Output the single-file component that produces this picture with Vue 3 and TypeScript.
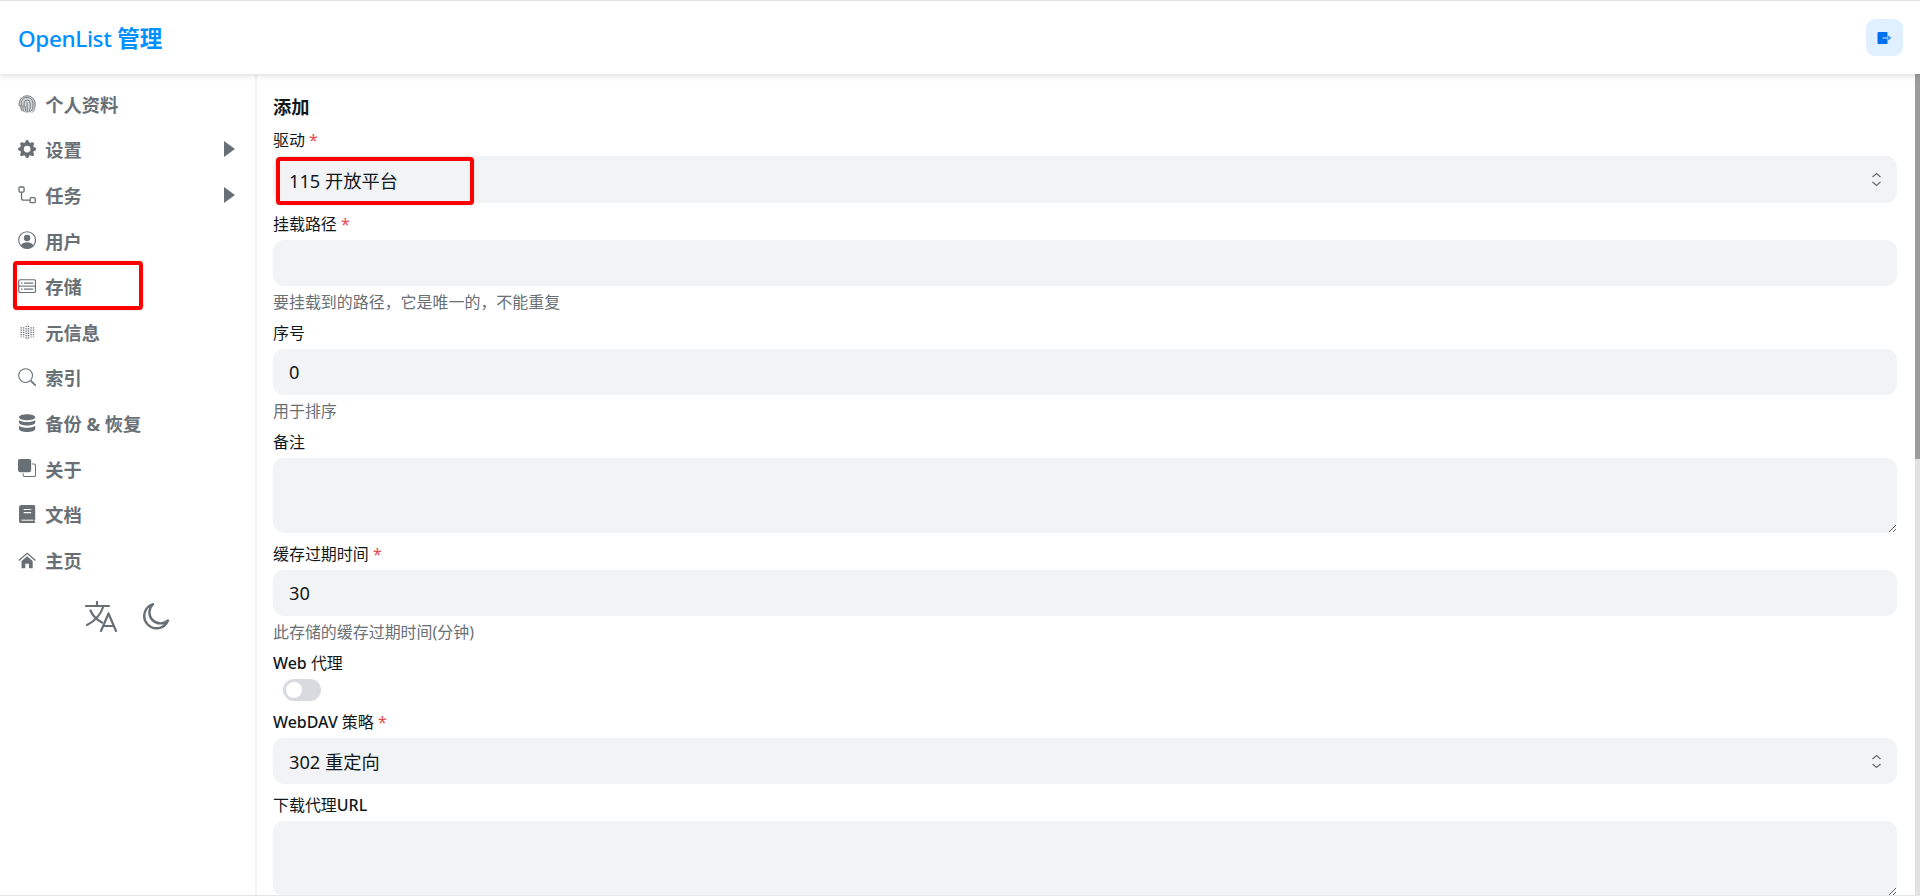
<script setup lang="ts">
interface Shape { d: string; fill?: boolean; w?: number; c?: string; dash?: string }
interface NavItem { label: string; box: string; shapes: Shape[]; caret?: boolean; marked?: boolean }

const gear =
  'M9.405 1.05c-.413-1.4-2.397-1.4-2.81 0l-.1.34a1.464 1.464 0 0 1-2.105.872l-.31-.17c-1.283-.698-2.686.705-1.987 1.987l.169.311c.446.82.023 1.841-.872 2.105l-.34.1c-1.4.413-1.4 2.397 0 2.81l.34.1a1.464 1.464 0 0 1 .872 2.105l-.17.31c-.698 1.283.705 2.686 1.987 1.987l.311-.169a1.464 1.464 0 0 1 2.105.872l.1.34c.413 1.4 2.397 1.4 2.81 0l.1-.34a1.464 1.464 0 0 1 2.105-.872l.31.17c1.283.698 2.686-.705 1.987-1.987l-.169-.311a1.464 1.464 0 0 1 .872-2.105l.34-.1c1.4-.413 1.4-2.397 0-2.81l-.34-.1a1.464 1.464 0 0 1-.872-2.105l.17-.31c.698-1.283-.705-2.686-1.987-1.987l-.311.169a1.464 1.464 0 0 1-2.105-.872l-.1-.34zM8 10.93a2.929 2.929 0 1 1 0-5.86 2.929 2.929 0 0 1 0 5.858z'

const nav: NavItem[] = [
  {
    label: '个人资料', box: '0 0 18 18',
    shapes: [
      { d: 'M9 .4a8.500 8.500 0 1 1 0 17.200A8.500 8.500 0 0 1 9 .4z', fill: true, c: '#d3d5d7' },
      { d: 'M1.200 11V8.500a7.800 7.800 0 0 1 15.600 0V11c0 3-1.500 5.500-3.500 6.500M4 16C3 14 2.800 12 2.800 10', w: .8 },
      { d: 'M3.300 11V8a5.700 5.700 0 0 1 11.400 0v3c0 2.500-1 4.500-2.500 5.500M6 16.500C5 14.500 4.600 12.500 4.600 10', w: .8 },
      { d: 'M6 12V8a3 3 0 0 1 6 0v4c0 2-.5 3.500-1.500 5M8 17c-.7-2-1-4-1-6', w: .8 },
      { d: 'M9 7v5c0 2 .2 3.500 .5 5', w: .8 }
    ]
  },
  { label: '设置', box: '0 0 16 16', caret: true, shapes: [{ d: gear, fill: true }] },
  {
    label: '任务', box: '0 0 18 18', caret: true,
    shapes: [
      { d: 'M1 2a1 1 0 0 1 1-1h3a1 1 0 0 1 1 1v3a1 1 0 0 1-1 1H2a1 1 0 0 1-1-1z', w: 1.3 },
      { d: 'M12 12.500a1 1 0 0 1 1-1h3a1 1 0 0 1 1 1v3a1 1 0 0 1-1 1h-3a1 1 0 0 1-1-1z', w: 1.3 },
      { d: 'M3.500 6v6a2 2 0 0 0 2 2H12', w: 1.3 }
    ]
  },
  {
    label: '用户', box: '0 0 18 18',
    shapes: [
      { d: 'M9 .7a8.300 8.300 0 1 1 0 16.600A8.300 8.300 0 0 1 9 .7z', w: 1.1 },
      { d: 'M9 3.800a3.200 3.200 0 1 1 0 6.400 3.200 3.200 0 0 1 0-6.400z', fill: true },
      { d: 'M2.800 14.200c1.200-2.400 3.600-3.200 6.200-3.200s5 .8 6.200 3.200A8.200 8.200 0 0 1 9 17.300a8.200 8.200 0 0 1-6.200-3.100z', fill: true }
    ]
  },
  {
    label: '存储', box: '0 0 18 18', marked: true,
    shapes: [
      { d: 'M2 2.700h14a1.300 1.300 0 0 1 1.300 1.300v10a1.300 1.300 0 0 1-1.300 1.300H2A1.300 1.300 0 0 1 .7 14V4A1.300 1.300 0 0 1 2 2.700z', w: 1.2 },
      { d: 'M.7 9h16.600', w: 1.1 },
      { d: 'M3 6h1.500M6 6h9M3 12h1.500M6 12h9', w: 1.2 }
    ]
  },
  {
    label: '元信息', box: '0 0 18 20',
    shapes: [
      { d: 'M2.500 4.700v11M5.200 4.700v11M7.900 3.200v14M10.600 3.200v14M13.300 4.700v11M16 4.700v11', w: 1.500, dash: '1.300 1.200' },
      { d: 'M9.200 0v20', w: .7, dash: '1.500 1', c: '#b4b8bb' }
    ]
  },
  {
    label: '索引', box: '0 0 18 18',
    shapes: [
      { d: 'M7.500 .7a6.800 6.800 0 1 1 0 13.600 6.800 6.800 0 0 1 0-13.600z', w: 1.1 },
      { d: 'M12.500 12.500 17.500 17.500', w: 1.6 }
    ]
  },
  {
    label: '备份 & 恢复', box: '0 0 18 18',
    shapes: [
      { d: 'M1 3.200C1 1.200 5 .2 9 .2s8 1 8 3-4 3-8 3-8-1-8-3z', fill: true },
      { d: 'M1 6v2.300c0 2 4 3 8 3s8-1 8-3V6c-1.500 1.500-5 2-8 2S2.500 7.500 1 6z', fill: true },
      { d: 'M1 11.500v3c0 2 4 3.200 8 3.200s8-1.200 8-3.200v-3c-1.500 1.500-5 2-8 2s-6.500-.5-8-2z', fill: true }
    ]
  },
  {
    label: '关于', box: '0 0 18 18',
    shapes: [
      { d: 'M1.800 0h9.400A1.800 1.800 0 0 1 13 1.800v9.400a1.800 1.800 0 0 1-1.800 1.800H1.800A1.800 1.800 0 0 1 0 11.200V1.800A1.800 1.800 0 0 1 1.800 0z', fill: true },
      { d: 'M14 5h1.800a1.500 1.500 0 0 1 1.500 1.500v9.300a1.500 1.500 0 0 1-1.500 1.500H6.500A1.500 1.500 0 0 1 5 15.800V14', w: 1 }
    ]
  },
  {
    label: '文档', box: '0 0 18 18',
    shapes: [
      { d: 'M3.500 0h12A1.500 1.500 0 0 1 17 1.500v12.500c0 .5-.3 .8-.7 1v1.300c.4 .2 .7 .4 .7 .8v.9H3.500A2.500 2.500 0 0 1 1 15.500v-13A2.500 2.500 0 0 1 3.500 0z', fill: true },
      { d: 'M5.500 4.500h7.500M5.500 7.500h7.500', w: 1.100, c: '#ffffff' },
      { d: 'M3.500 15h11.500', w: 1, c: '#ffffff' }
    ]
  },
  {
    label: '主页', box: '0 0 18 18',
    shapes: [
      { d: 'M3.500 9.800 9 5.300l5.500 4.500V17h-3.700v-4.500H7.200V17H3.500z', fill: true },
      { d: 'M.8 9.300 9 2.300l8.200 7', w: 1.300 }
    ]
  }
]
</script>

<template>
  <div class="page">
    <header class="top">
      <h1 class="brand"><span class="brand-en">OpenList</span> 管理</h1>
      <button class="logout" type="button" aria-label="退出">
        <svg width="15" height="14" viewBox="0 0 15 14">
          <path d="M1.500 1h8a1 1 0 0 1 1 1v10a1 1 0 0 1-1 1h-8a1 1 0 0 1-1-1V2a1 1 0 0 1 1-1z" fill="#0070f0" />
          <path d="M5.500 7h6" stroke="#8cc0f8" stroke-width="1.600" fill="none" />
          <path d="M11 4.500 14.500 7 11 9.500z" fill="#3b91f5" />
        </svg>
      </button>
    </header>

    <div class="body">
      <aside class="side">
        <nav class="menu">
          <a v-for="item in nav" :key="item.label" class="item">
            <svg class="ico" :viewBox="item.box" aria-hidden="true">
              <path
                v-for="(s, i) in item.shapes"
                :key="i"
                :d="s.d"
                :fill="s.fill ? (s.c || '#687076') : 'none'"
                :stroke="s.fill ? 'none' : (s.c || '#687076')"
                :stroke-width="s.w"
                :stroke-dasharray="s.dash"
              />
            </svg>
            <span class="item-text">{{ item.label }}</span>
            <span v-if="item.caret" class="caret"></span>
            <span v-if="item.marked" class="mark mark-nav"></span>
          </a>
        </nav>
        <div class="tools">
          <svg width="33" height="31" viewBox="0 0 33 31" fill="none" stroke="#687076" stroke-width="2.200" stroke-linecap="round" stroke-linejoin="round">
            <path d="M1 5h23M12 1v4M18.500 5C16 13 10 20 2 24M5.500 9.500C8 15.500 12 19 17 21.500" />
            <path d="M16 30 23.500 12.500 31 30M18.500 25h10" />
          </svg>
          <svg width="28" height="28" viewBox="0 0 28 28" fill="none" stroke="#687076" stroke-width="2.400" stroke-linejoin="round">
            <path d="M26 18.500A12.300 12.300 0 1 1 11 2.200a10 10 0 0 0 15 16.300z" />
          </svg>
        </div>
      </aside>

      <main class="main">
        <form class="form" @submit.prevent>
          <h2 class="title">添加</h2>

          <div class="field">
            <label class="label">驱动 <em>*</em></label>
            <div class="select first">
              <span>115 开放平台</span>
              <svg class="updown" width="11" height="15" viewBox="0 0 11 15" fill="none" stroke="#687076" stroke-width="1.300"><path d="M1.500 5 5.500 1.500 9.500 5M1.500 10 5.500 13.500 9.500 10" /></svg>
              <span class="mark mark-select"></span>
            </div>
          </div>

          <div class="field">
            <label class="label">挂载路径 <em>*</em></label>
            <input class="input" type="text" />
            <p class="help">要挂载到的路径，它是唯一的，不能重复</p>
          </div>

          <div class="field">
            <label class="label">序号</label>
            <input class="input" type="text" value="0" />
            <p class="help">用于排序</p>
          </div>

          <div class="field">
            <label class="label">备注</label>
            <textarea class="area"></textarea>
          </div>

          <div class="field">
            <label class="label">缓存过期时间 <em>*</em></label>
            <input class="input" type="text" value="30" />
            <p class="help">此存储的缓存过期时间(分钟)</p>
          </div>

          <div class="field">
            <label class="label"><b>Web</b> 代理</label>
            <span class="switch"><span class="knob"></span></span>
          </div>

          <div class="field">
            <label class="label"><b>WebDAV</b> 策略 <em>*</em></label>
            <div class="select">
              <span>302 重定向</span>
              <svg class="updown" width="11" height="15" viewBox="0 0 11 15" fill="none" stroke="#687076" stroke-width="1.300"><path d="M1.500 5 5.500 1.500 9.500 5M1.500 10 5.500 13.500 9.500 10" /></svg>
            </div>
          </div>

          <div class="field">
            <label class="label">下载代理<b>URL</b></label>
            <textarea class="area"></textarea>
          </div>
        </form>
      </main>

      <div class="scrollbar"><div class="thumb"></div></div>
    </div>
  </div>
</template>

<style>
html, body { margin: 0; height: 100%; overflow: hidden; background: #fff; }
</style>

<style scoped>
.page {
  height: 896px;
  box-sizing: border-box;
  display: flex;
  flex-direction: column;
  overflow: hidden;
  border-top: 1px solid #e3e3e3;
  border-bottom: 1px solid #e6e6e6;
  font-family: "Noto Sans", "Noto Sans CJK SC", sans-serif;
  color: #11181c;
}
.top {
  position: relative;
  z-index: 2;
  flex: none;
  height: 73px;
  box-sizing: border-box;
  display: flex;
  align-items: center;
  justify-content: space-between;
  padding: 0 17px 0 18px;
  background: #fff;
  box-shadow: 0 2px 6px rgba(0, 0, 0, .13);
}
.brand {
  margin: 1px 0 0;
  font-size: 22.5px;
  font-weight: 700;
  color: #0091ff;
  line-height: 1.2;
}
.brand-en { font-weight: 500; letter-spacing: -.35px; }
.logout {
  width: 37px;
  height: 37px;
  padding: 0;
  border: 0;
  border-radius: 9px;
  background: #e1f0ff;
  display: flex;
  align-items: center;
  justify-content: center;
}
.body { flex: 1; display: flex; min-height: 0; }
.side {
  flex: none;
  width: 257px;
  box-sizing: border-box;
  border-right: 2px solid #f3f4f5;
  padding: 7px 0 0 18px;
}
.menu { display: flex; flex-direction: column; padding-right: 20px; }
.item {
  position: relative;
  height: 45.6px;
  display: flex;
  align-items: center;
  gap: 9px;
  color: #687076;
  font-size: 18.24px;
  font-weight: 700;
}
.ico { width: 18.24px; height: 18.24px; flex: none; }
.item-text { flex: 1; white-space: nowrap; }
.caret {
  width: 0;
  height: 0;
  border-left: 11.500px solid #687076;
  border-top: 8px solid transparent;
  border-bottom: 8px solid transparent;
}
.mark {
  position: absolute;
  box-sizing: border-box;
  border: 4px solid #f00;
  border-radius: 4px;
  box-shadow: 0 0 1px #666;
  pointer-events: none;
}
.mark-nav { left: -5px; top: -2px; width: 130px; height: 49px; }
.mark-select { left: 3px; top: 1px; width: 198px; height: 48px; }
.tools {
  display: flex;
  justify-content: center;
  align-items: center;
  gap: 24px;
  padding: 18px 18px 0 0;
}
.main {
  flex: 1;
  min-width: 0;
  overflow: hidden;
}
.scrollbar { flex: none; width: 5px; background: #e2e2e2; }
.thumb { height: 385px; background: #9c9c9c; }
.form {
  box-sizing: border-box;
  display: flex;
  flex-direction: column;
  gap: 10px;
  padding: 21px 18px 0 16px;
}
.title {
  margin: 0;
  font-size: 18.24px;
  line-height: 24px;
  font-weight: 700;
}
.field { display: flex; flex-direction: column; align-items: stretch; }
.label {
  font-size: 15.96px;
  line-height: 22px;
  font-weight: 400;
  margin-bottom: 5px;
}
.label b { font-weight: 500; }
.label em { font-style: normal; color: #e5484d; }
.select, .input, .area {
  box-sizing: border-box;
  border: 0;
  outline: 0;
  background: #f1f3f5;
  border-radius: 11px;
  font-family: inherit;
  font-size: 18.24px;
  color: #11181c;
  padding: 0 16px;
  width: 100%;
  display: block;
}
.select {
  position: relative;
  height: 45.6px;
  display: flex;
  align-items: center;
  justify-content: space-between;
}
.select.first { height: 47px; }
.updown { margin-right: -1px; }
.input { height: 45.6px; }
.area { height: 75px; padding-top: 8px; resize: vertical; }
.help {
  margin: 6.500px 0 0;
  font-size: 15.96px;
  line-height: 20px;
  color: #687076;
}
.switch {
  width: 38px;
  height: 22px;
  margin: 0 0 0 10px;
  border-radius: 11px;
  background: #d7dbdf;
  padding: 3px;
  box-sizing: border-box;
  display: block;
}
.knob { display: block; width: 16px; height: 16px; border-radius: 50%; background: #fff; }
</style>
